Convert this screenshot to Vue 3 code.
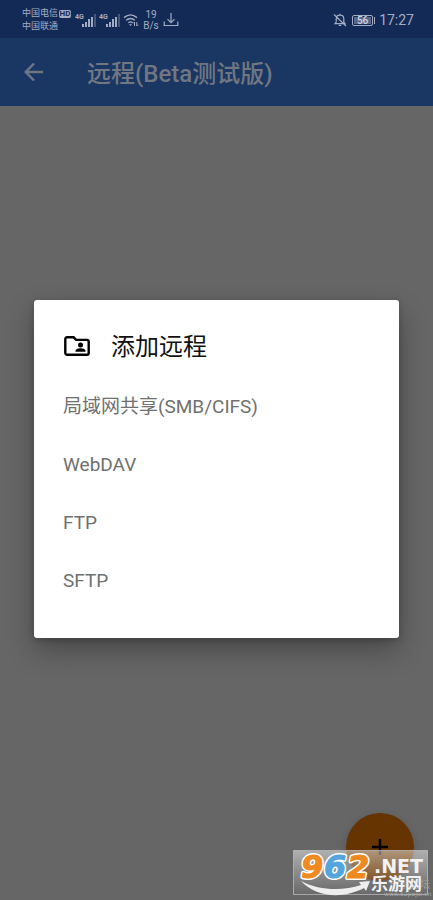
<script setup>
const title = '远程(Beta测试版)'
const remotes = ['局域网共享(SMB/CIFS)', 'WebDAV', 'FTP', 'SFTP']
const bars = [3, 5, 8, 10, 13]
const digits = [
  { text: '9', x: 8, color: '#ef8a22' },
  { text: '6', x: 31, color: '#55a5dc' },
  { text: '2', x: 54, color: '#ef8a22' }
]
</script>

<template>
  <div class="screen">
    <header class="status">
      <div class="carriers">
        <div class="carrier">中国电信<span class="hd">HD</span></div>
        <div class="carrier">中国联通</div>
      </div>
      <svg v-for="n in 2" :key="n" class="signal" viewBox="0 0 21 16" aria-hidden="true">
        <text x="0" y="7" class="net">4G</text>
        <rect
          v-for="(h, i) in bars"
          :key="i"
          :x="7 + i * 3"
          :y="15 - h"
          width="2"
          :height="h"
          :opacity="i === 4 ? 0.35 : 1"
          fill="#a3acc2"
        />
      </svg>
      <svg class="wifi" viewBox="0 0 16 14" fill="none" stroke="#a3acc2" stroke-width="1.4" aria-hidden="true">
        <path d="M1 4.6Q7.500 -.8 14 4.600M3.200 7.300Q7.500 3.600 11.800 7.300M5.300 9.800Q7.500 8 9.700 9.800" />
        <path d="M6 11.200h3L7.500 13z" fill="#a3acc2" stroke="none" />
        <path d="M11.500 9v4M10.300 10.300l1.200-1.300M13.800 9v4M15 11.700L13.800 13" stroke-width="1" />
      </svg>
      <div class="speed"><span>19</span><span>B/s</span></div>
      <svg class="download" viewBox="0 0 16 16" fill="none" stroke="#a3acc2" stroke-width="1.2" aria-hidden="true">
        <path d="M8 1v9.500M4.500 7.200L8 10.700l3.500-3.500M1.200 9.500v4h13.600v-4" />
      </svg>
      <div class="spacer"></div>
      <svg class="bell" viewBox="0 0 14 14" fill="none" stroke="#a3acc2" stroke-width="1.200" aria-hidden="true">
        <path d="M2 10.600h10L10.800 9V6c0-2.400-1.500-3.800-3.800-3.800S3.200 3.600 3.200 6v3zM7 .8v1.400M5.800 12.400h2.400M1 1.500l12 11.500" />
      </svg>
      <div class="battery"><span class="level">56</span></div>
      <time class="clock">17:27</time>
    </header>

    <nav class="appbar">
      <button class="back" type="button" aria-label="返回">
        <svg viewBox="0 0 20 20" fill="none" stroke="#707782" stroke-width="2.400">
          <path d="M19 10H2M10 1.500L1.700 10l8.300 8.500" />
        </svg>
      </button>
      <h1>{{ title }}</h1>
    </nav>

    <main class="content">
      <button class="fab" type="button" aria-label="添加">
        <svg viewBox="0 0 16 16" stroke="#000" stroke-width="2.400"><path d="M8 0v16M0 8h16" /></svg>
      </button>
    </main>

    <div class="overlay">
      <section class="dialog" role="dialog" aria-labelledby="dialog-title">
        <div class="heading">
          <svg class="folder" viewBox="0 0 26 20" aria-hidden="true">
            <path
              d="M3 1.300h6.600l2.500 2.600H23a1.700 1.700 0 0 1 1.700 1.700V17a1.700 1.700 0 0 1-1.700 1.700H3A1.700 1.700 0 0 1 1.300 17V3A1.700 1.700 0 0 1 3 1.300z"
              fill="none"
              stroke="#000"
              stroke-width="2.400"
            />
            <circle cx="16.500" cy="8.900" r="2.500" />
            <path d="M11.500 15.800v-1.100c0-1.700 3.300-2.500 5-2.500s5 .8 5 2.500v1.100z" />
          </svg>
          <h2 id="dialog-title">添加远程</h2>
        </div>
        <ul>
          <li v-for="item in remotes" :key="item">
            <button class="option" type="button">{{ item }}</button>
          </li>
        </ul>
      </section>
    </div>

    <svg class="watermark" viewBox="0 -10 140 60" role="img" aria-label="962.NET 乐游网">
      <defs>
        <linearGradient id="plate" x1="0" y1="0" x2="0" y2="1">
          <stop offset="0" stop-color="#fff" stop-opacity=".48" />
          <stop offset="1" stop-color="#fff" stop-opacity=".02" />
        </linearGradient>
      </defs>
      <rect x=".5" y=".5" width="134" height="44" fill="url(#plate)" stroke="#b8b8b8" stroke-opacity=".8" />
      <text x="97" y="38" class="faint-cn">破解论坛</text>
      <text x="91" y="46" class="faint-url">www.52pojie.cn</text>
      <path d="M8 31C27 41 50 41 68 35L66 32 77 31 73 41 71 38C50 49 24 48 8 31z" fill="#eee" />
      <g class="digits">
        <text
          v-for="d in digits"
          :key="d.text"
          class="halo"
          :x="d.x"
          y="28"
        >{{ d.text }}</text>
        <text
          v-for="d in digits"
          :key="d.text + 'face'"
          aria-hidden="true"
          :x="d.x"
          y="28"
          :fill="d.color"
          :stroke="d.color"
        >{{ d.text }}</text>
      </g>
      <text x="81" y="23" class="net-name">.NET</text>
      <text x="78" y="40" class="site">乐游网</text>
    </svg>
  </div>
</template>

<style>
body {
  margin: 0;
  background: #666;
}
</style>

<style scoped>
.screen {
  position: relative;
  display: flex;
  flex-direction: column;
  min-height: 100vh;
  overflow: hidden;
  background: #666;
  font-family: Roboto, "Noto Sans CJK SC", sans-serif;
}
h1,
h2,
ul {
  margin: 0;
  padding: 0;
}
button {
  padding: 0;
  border: 0;
  background: none;
  font: inherit;
  color: inherit;
  cursor: pointer;
}
svg {
  display: block;
  flex: none;
}
.status {
  display: flex;
  align-items: center;
  box-sizing: border-box;
  height: 38px;
  padding: 2px 19px 0 22px;
  background: #132a57;
  color: #a3acc2;
}
.carriers {
  width: 53px;
}
.carrier {
  display: flex;
  align-items: center;
  gap: 1px;
  height: 13px;
  font-size: 9px;
  line-height: 13px;
  white-space: nowrap;
}
.hd {
  width: 12px;
  height: 8px;
  border-radius: 2px;
  background: #a3acc2;
  color: #132a57;
  font-size: 8px;
  font-weight: 700;
  line-height: 8px;
  text-align: center;
}
.signal {
  width: 21px;
  height: 16px;
  margin-right: 3px;
}
.net {
  fill: #a3acc2;
  font: 700 7px Roboto, sans-serif;
}
.wifi {
  width: 16px;
  height: 14px;
}
.speed {
  display: flex;
  flex-direction: column;
  width: 24px;
  font-size: 10px;
  line-height: 11px;
  text-align: center;
}
.download {
  width: 16px;
  height: 16px;
}
.spacer {
  flex: 1;
}
.bell {
  width: 14px;
  height: 14px;
}
.battery {
  position: relative;
  width: 19px;
  height: 9px;
  margin: 0 6px 0 5px;
  border: 1px solid #a3acc2;
  border-radius: 2px;
}
.battery::after {
  content: "";
  position: absolute;
  top: 1px;
  right: -3px;
  width: 1px;
  height: 7px;
  background: #a3acc2;
}
.level {
  display: block;
  width: 17px;
  margin: 1px;
  background: #59688a;
  color: #d0d5e0;
  font-size: 10px;
  font-weight: 500;
  line-height: 7px;
  text-align: center;
}
.clock {
  font-size: 14px;
  line-height: 16px;
}
.appbar {
  display: flex;
  align-items: center;
  height: 68px;
  padding: 0 24px;
  background: #1a3663;
  color: #707782;
}
.back {
  width: 20px;
  height: 20px;
  margin-right: 43px;
}
.back svg {
  width: 20px;
  height: 20px;
}
h1 {
  padding-top: 3px;
  font-size: 24px;
  font-weight: 500;
  line-height: 32px;
  white-space: nowrap;
}
.content {
  display: flex;
  flex: 1;
  align-items: flex-end;
  justify-content: flex-end;
  padding: 0 19px 19px 0;
}
.fab {
  display: flex;
  align-items: center;
  justify-content: center;
  width: 68px;
  height: 68px;
  border-radius: 50%;
  background: #663400;
  box-shadow: 0 3px 8px rgba(0, 0, 0, 0.2);
}
.fab svg {
  width: 16px;
  height: 16px;
}
.overlay {
  position: absolute;
  inset: 38px 0 0;
  display: flex;
  align-items: center;
  padding: 0 34px;
}
.dialog {
  flex: 1;
  box-sizing: border-box;
  padding: 28px 29px;
  border-radius: 3px;
  background: #fff;
  box-shadow: 0 12px 28px rgba(0, 0, 0, 0.3), 0 2px 6px rgba(0, 0, 0, 0.2);
}
.heading {
  display: flex;
  align-items: center;
  gap: 21px;
  height: 36px;
  padding-left: 1px;
  margin-bottom: 14px;
}
.folder {
  width: 26px;
  height: 20px;
}
h2 {
  padding-top: 2px;
  color: #111;
  font-size: 24px;
  font-weight: 400;
  line-height: 36px;
}
ul {
  list-style: none;
}
.option {
  display: block;
  width: 100%;
  height: 58px;
  color: #707070;
  font-size: 19px;
  line-height: 28px;
  text-align: left;
}
.watermark {
  position: absolute;
  right: 0;
  bottom: 0;
  width: 140px;
  height: 60px;
}
.digits {
  font: italic 700 32px "DejaVu Sans", sans-serif;
  stroke-width: 1px;
  stroke-linejoin: round;
}
.halo {
  fill: #fff;
  stroke: #fff;
  stroke-width: 4px;
}
.net-name {
  fill: #f2f2f2;
  font: 700 19px "DejaVu Sans", sans-serif;
}
.site {
  fill: #f2f2f2;
  font: 700 17px "Noto Sans CJK SC", sans-serif;
}
.faint-cn {
  fill: #999;
  font: 400 10px "Noto Sans CJK SC", sans-serif;
}
.faint-url {
  fill: #aaa;
  font: 400 6px "DejaVu Sans", sans-serif;
}
</style>
